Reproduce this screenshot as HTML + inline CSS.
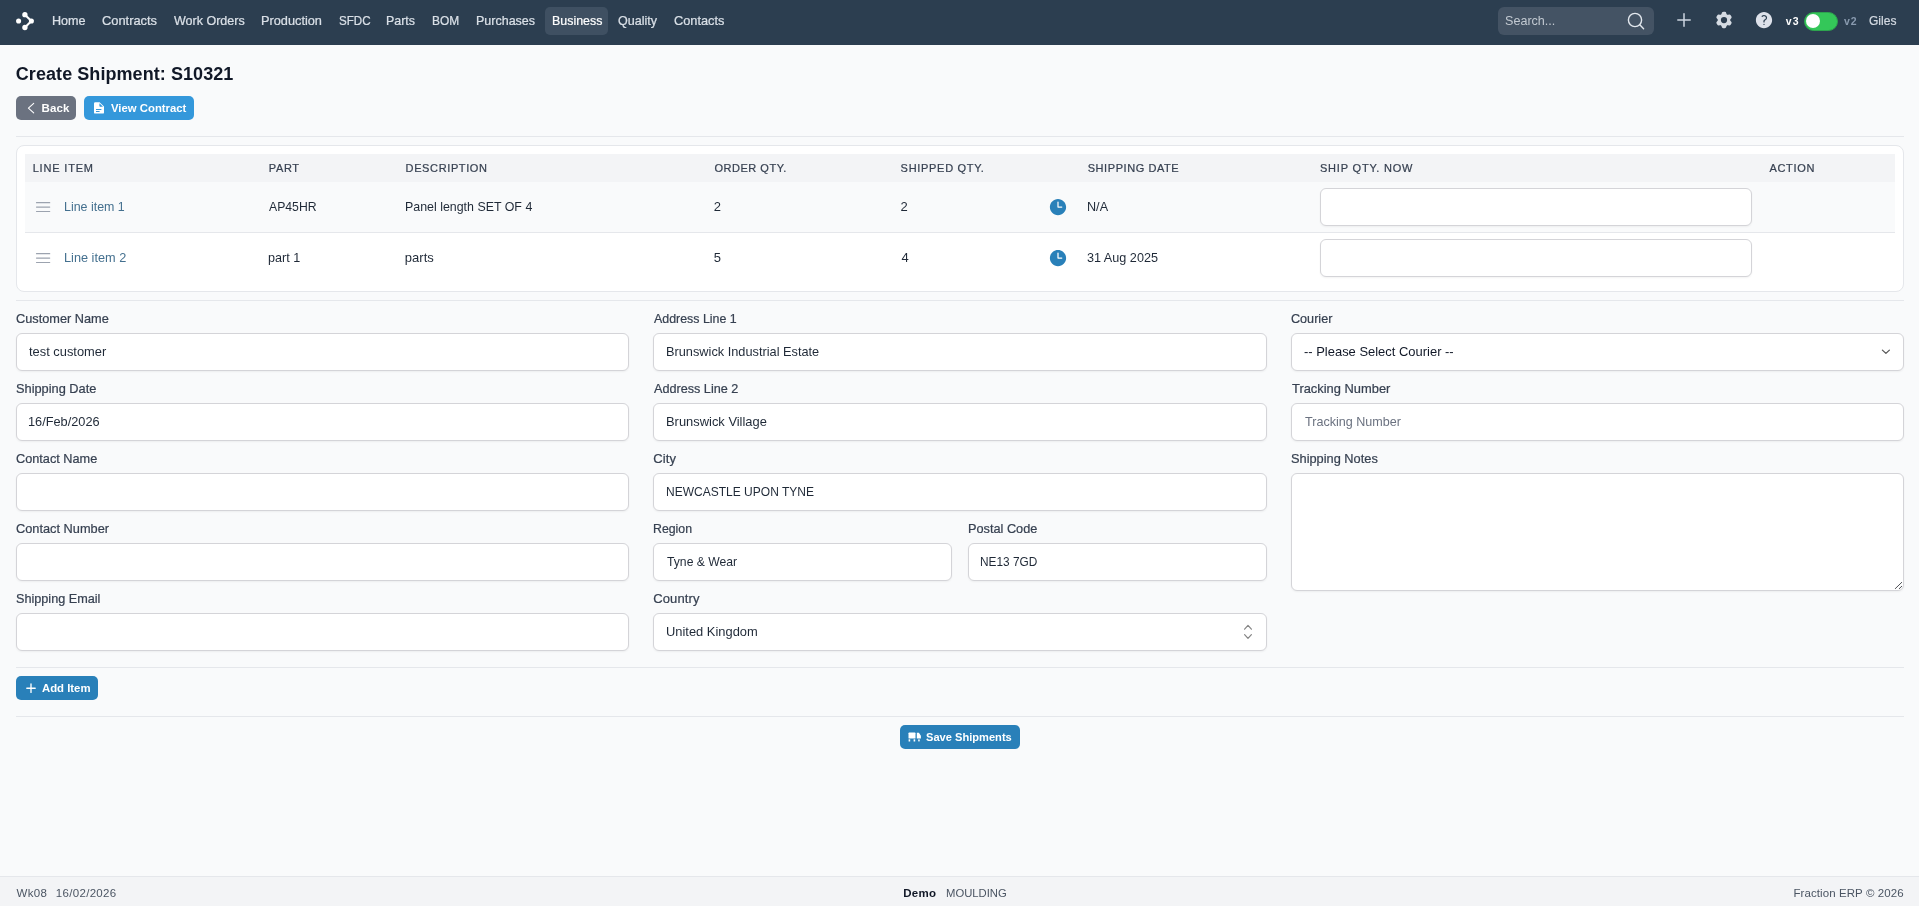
<!DOCTYPE html>
<html lang="en">
<head>
<meta charset="utf-8">
<title>Create Shipment: S10321</title>
<style>
*{box-sizing:border-box;margin:0;padding:0}
html,body{width:1919px;height:906px;overflow:hidden}
body{font-family:"Liberation Sans",sans-serif;background:#f9fafb;color:#1f2937;position:relative;font-size:13px}
.abs{position:absolute}
#tx{position:absolute;left:0;top:0;width:1919px;height:906px;will-change:transform;opacity:.999}
.t{position:absolute;white-space:nowrap;line-height:20px;transform-origin:0 50%}
#nav{position:absolute;left:0;top:0;width:1919px;height:45px;background:#2c3e50}
#act{position:absolute;left:545px;top:7px;width:63px;height:28px;border-radius:5px;background:#3f5062}
#search{position:absolute;left:1498px;top:7px;width:156px;height:28px;border-radius:6px;background:#445364}
.btn{position:absolute;height:24px;border-radius:5px}
.hr{position:absolute;left:16px;width:1888px;height:1px;background:#e5e7eb}
#card{position:absolute;left:16px;top:145px;width:1888px;height:147px;background:#fff;border:1px solid #e5e7eb;border-radius:8px}
#thead{position:absolute;left:25px;top:154px;width:1870px;height:28px;background:#f3f4f6}
#row1{position:absolute;left:25px;top:182px;width:1870px;height:51px;background:#f9fafb;border-bottom:1px solid #e5e7eb}
.inp{position:absolute;height:38px;background:#fff;border:1px solid #d4d4d8;border-radius:6px;box-shadow:0 1px 2px rgba(0,0,0,.05)}
#foot{position:absolute;left:0;top:876px;width:1919px;height:30px;background:#f3f4f6;border-top:1px solid #e5e7eb}
</style>
</head>
<body>

<!-- NAV -->
<div id="nav"></div>
<svg class="abs" style="left:14px;top:10px" width="22" height="22" viewBox="0 0 22 22">
  <g fill="#fff" stroke="none">
    <circle cx="4.6" cy="11" r="2.55"/>
    <circle cx="10.9" cy="4.7" r="2.65"/>
    <circle cx="17.4" cy="11" r="2.55"/>
    <circle cx="10.9" cy="17.5" r="2.65"/>
  </g>
  <path d="M10.9 4.7 L17.4 11 L10.9 17.5" fill="none" stroke="#fff" stroke-width="2.1" stroke-linecap="round" stroke-linejoin="round"/>
</svg>
<div id="act"></div>
<div id="search"></div>
<svg class="abs" style="left:1625px;top:10px" width="22" height="22" viewBox="0 0 22 22">
  <circle cx="10" cy="10" r="6.6" fill="none" stroke="#e3e8ee" stroke-width="1.4"/>
  <path d="M14.8 14.8 L18.6 18.7" stroke="#e3e8ee" stroke-width="1.4" stroke-linecap="round"/>
</svg>
<svg class="abs" style="left:1676px;top:12px" width="16" height="16" viewBox="0 0 16 16">
  <path d="M8 1.8 V14.2 M1.8 8 H14.2" stroke="#ccd5df" stroke-width="1.5" stroke-linecap="round"/>
</svg>
<svg class="abs" style="left:1714px;top:10px" width="20" height="20" viewBox="0 0 24 24"><path fill="#d5dbe3" fill-rule="evenodd" clip-rule="evenodd" d="M11.078 2.25c-.917 0-1.699.663-1.85 1.567L9.05 4.889c-.02.12-.115.26-.297.348a7.493 7.493 0 0 0-.986.57c-.166.115-.334.126-.45.083L6.3 5.508a1.875 1.875 0 0 0-2.282.819l-.922 1.597a1.875 1.875 0 0 0 .432 2.385l.84.692c.095.078.17.229.154.43a7.598 7.598 0 0 0 0 1.139c.015.2-.059.352-.153.43l-.841.692a1.875 1.875 0 0 0-.432 2.385l.922 1.597a1.875 1.875 0 0 0 2.282.818l1.019-.382c.115-.043.283-.031.45.082.312.214.641.405.985.57.182.088.277.228.297.35l.178 1.071c.151.904.933 1.567 1.85 1.567h1.844c.916 0 1.699-.663 1.85-1.567l.178-1.072c.02-.12.114-.26.297-.349.344-.165.673-.356.985-.57.167-.114.335-.125.45-.082l1.02.382a1.875 1.875 0 0 0 2.28-.819l.923-1.597a1.875 1.875 0 0 0-.432-2.385l-.84-.692c-.095-.078-.17-.229-.154-.43a7.614 7.614 0 0 0 0-1.139c-.016-.2.059-.352.153-.43l.84-.692c.708-.582.891-1.59.433-2.385l-.922-1.597a1.875 1.875 0 0 0-2.282-.818l-1.02.382c-.114.043-.282.031-.449-.083a7.49 7.49 0 0 0-.985-.57c-.183-.087-.277-.227-.297-.348l-.179-1.072a1.875 1.875 0 0 0-1.85-1.567h-1.843ZM12 15.75a3.75 3.75 0 1 0 0-7.5 3.75 3.75 0 0 0 0 7.5Z"/></svg>
<svg class="abs" style="left:1754px;top:10px" width="20" height="20" viewBox="0 0 24 24"><path fill="#dde1ea" fill-rule="evenodd" clip-rule="evenodd" d="M2.25 12c0-5.385 4.365-9.75 9.75-9.75s9.750 4.365 9.750 9.750-4.365 9.750-9.750 9.750S2.25 17.385 2.25 12Zm11.378-3.917c-.89-.777-2.366-.777-3.255 0a.75.75 0 0 1-.988-1.129c1.454-1.272 3.776-1.272 5.23 0 1.513 1.324 1.513 3.518 0 4.842a3.75 3.75 0 0 1-.837.552c-.676.328-1.028.774-1.028 1.152v.75a.75.75 0 0 1-1.5 0v-.75c0-1.279 1.060-2.107 1.875-2.502.182-.088.351-.199.503-.331.83-.727.83-1.857 0-2.584ZM12 18a.75.75 0 1 0 0-1.500.75.75 0 0 0 0 1.500Z"/></svg>
<div class="abs" style="left:1804px;top:11.5px;width:34px;height:19px;border-radius:10px;background:#34c759;border:1px solid #2da44e"></div>
<div class="abs" style="left:1806px;top:14px;width:14px;height:14px;border-radius:7px;background:#fff"></div>

<!-- BUTTONS -->
<div class="btn" style="left:16px;top:96px;width:60px;background:#6b7280"></div>
<svg class="abs" style="left:25px;top:102px" width="12" height="12" viewBox="0 0 12 12"><path d="M8.7 1.4 L3.4 6.1 L8.7 10.8" fill="none" stroke="#fff" stroke-width="1.1" stroke-linecap="round" stroke-linejoin="round"/></svg>
<div class="btn" style="left:84px;top:96px;width:110px;background:#3498db"></div>
<svg class="abs" style="left:93px;top:102px" width="12" height="12" viewBox="0 0 12 12"><path fill="#fff" fill-rule="evenodd" d="M2.2 0.2 H6.6 L11 4.6 V10.4 A1.2 1.2 0 0 1 9.8 11.6 H2.2 A1.2 1.2 0 0 1 1 10.4 V1.4 A1.2 1.2 0 0 1 2.2 0.2 Z M6.4 1.2 V4 A0.8 0.8 0 0 0 7.2 4.8 H10 Z M3 7 H8.4 V7.9 H3 Z M3 9 H6.6 V9.9 H3 Z"/></svg>

<div class="hr" style="top:136px"></div>

<!-- TABLE CARD -->
<div id="card"></div>
<div id="thead"></div>
<div id="row1"></div>
<svg class="abs" style="left:35px;top:201px" width="16" height="12" viewBox="0 0 16 12"><path d="M1.5 1.7 H14.7 M1.5 6.1 H14.7 M1.5 10.5 H14.7" stroke="#9ca3af" stroke-width="1.2" stroke-linecap="round"/></svg>
<svg class="abs" style="left:1047.9px;top:197px" width="20" height="20" viewBox="0 0 24 24"><path fill="#2980b9" fill-rule="evenodd" clip-rule="evenodd" d="M12 2.25c-5.385 0-9.75 4.365-9.750 9.750s4.365 9.750 9.750 9.750 9.750-4.365 9.750-9.750S17.385 2.25 12 2.25ZM12.75 6a.75.75 0 0 0-1.500 0v6c0 .414.336.75.75.75h4.500a.75.75 0 0 0 0-1.500h-3.750V6Z"/></svg>
<div class="inp" style="left:1320px;top:188px;width:432px"></div>
<svg class="abs" style="left:35px;top:252px" width="16" height="12" viewBox="0 0 16 12"><path d="M1.5 1.7 H14.7 M1.5 6.1 H14.7 M1.5 10.5 H14.7" stroke="#9ca3af" stroke-width="1.2" stroke-linecap="round"/></svg>
<svg class="abs" style="left:1047.9px;top:248px" width="20" height="20" viewBox="0 0 24 24"><path fill="#2980b9" fill-rule="evenodd" clip-rule="evenodd" d="M12 2.25c-5.385 0-9.75 4.365-9.750 9.750s4.365 9.750 9.750 9.750 9.750-4.365 9.750-9.750S17.385 2.25 12 2.25ZM12.75 6a.75.75 0 0 0-1.500 0v6c0 .414.336.75.75.75h4.500a.75.75 0 0 0 0-1.500h-3.750V6Z"/></svg>
<div class="inp" style="left:1320px;top:239px;width:432px"></div>

<div class="hr" style="top:300px"></div>

<!-- FORM -->
<div class="inp" style="left:16px;top:333px;width:613px"></div>
<div class="inp" style="left:16px;top:403px;width:613px"></div>
<div class="inp" style="left:16px;top:473px;width:613px"></div>
<div class="inp" style="left:16px;top:543px;width:613px"></div>
<div class="inp" style="left:16px;top:613px;width:613px"></div>

<div class="inp" style="left:653px;top:333px;width:614px"></div>
<div class="inp" style="left:653px;top:403px;width:614px"></div>
<div class="inp" style="left:653px;top:473px;width:614px"></div>
<div class="inp" style="left:653px;top:543px;width:299px"></div>
<div class="inp" style="left:968px;top:543px;width:299px"></div>
<div class="inp" style="left:653px;top:613px;width:614px"></div>
<svg class="abs" style="left:1242px;top:624px" width="12" height="16" viewBox="0 0 12 16"><path d="M2.6 5.2 L6 1.4 L9.4 5.2 M2.6 10.6 L6 14.4 L9.4 10.6" fill="none" stroke="#858585" stroke-width="1.2" stroke-linecap="round" stroke-linejoin="round"/></svg>

<div class="inp" style="left:1291px;top:333px;width:613px"></div>
<svg class="abs" style="left:1880px;top:347px" width="12" height="10" viewBox="0 0 12 10"><path d="M2.4 3.1 L5.9 6.4 L9.4 3.1" fill="none" stroke="#555" stroke-width="1.25" stroke-linecap="round" stroke-linejoin="round"/></svg>
<div class="inp" style="left:1291px;top:403px;width:613px"></div>
<div class="inp" style="left:1291px;top:473px;width:613px;height:118px"></div>
<svg class="abs" style="left:1892px;top:579px" width="10" height="10" viewBox="0 0 10 10"><path d="M9.9 3.2 L3.1 9.8 M9.8 7.2 L7.2 9.7" stroke="#505358" stroke-width="1" stroke-linecap="round"/></svg>

<div class="hr" style="top:667px"></div>
<div class="btn" style="left:16px;top:676px;width:82px;background:#2980b9"></div>
<svg class="abs" style="left:25px;top:682px" width="12" height="12" viewBox="0 0 12 12"><path d="M6 2 V10.4 M1.8 6.2 H10.2" stroke="#fff" stroke-width="1.35" stroke-linecap="round"/></svg>
<div class="hr" style="top:716px"></div>
<div class="btn" style="left:900px;top:725px;width:120px;background:#2980b9"></div>
<svg class="abs" style="left:908px;top:732px" width="14" height="10" viewBox="0 0 14 10">
  <g fill="#fff"><rect x="0.5" y="0.6" width="7" height="6" rx="0.7"/><path d="M8.8 0.8 h2.1 l2 3 v2.8 h-4.1z"/><rect x="0.6" y="7.3" width="1.6" height="2.2"/><rect x="5.6" y="7.3" width="1.6" height="2.2"/><rect x="10.2" y="7.4" width="1.5" height="2"/></g>
</svg>

<div id="foot"></div>

<div id="tx">
<span class="t" style="left:52.03px;top:11px;font-size:13px;font-weight:normal;color:#dbe1e8;transform:scaleX(0.9697);-webkit-text-stroke:0.22px #dbe1e8">Home</span>
<span class="t" style="left:101.91px;top:11px;font-size:13px;font-weight:normal;color:#dbe1e8;transform:scaleX(0.9889);-webkit-text-stroke:0.22px #dbe1e8">Contracts</span>
<span class="t" style="left:173.8px;top:11px;font-size:13px;font-weight:normal;color:#dbe1e8;transform:scaleX(0.963);-webkit-text-stroke:0.22px #dbe1e8">Work Orders</span>
<span class="t" style="left:260.92px;top:11px;font-size:13px;font-weight:normal;color:#dbe1e8;transform:scaleX(0.9803);-webkit-text-stroke:0.22px #dbe1e8">Production</span>
<span class="t" style="left:338.61px;top:11px;font-size:13px;font-weight:normal;color:#dbe1e8;transform:scaleX(0.8912);-webkit-text-stroke:0.22px #dbe1e8">SFDC</span>
<span class="t" style="left:386.34px;top:11px;font-size:13px;font-weight:normal;color:#dbe1e8;transform:scaleX(0.9552);-webkit-text-stroke:0.22px #dbe1e8">Parts</span>
<span class="t" style="left:432.38px;top:11px;font-size:13px;font-weight:normal;color:#dbe1e8;transform:scaleX(0.9179);-webkit-text-stroke:0.22px #dbe1e8">BOM</span>
<span class="t" style="left:475.84px;top:11px;font-size:13px;font-weight:normal;color:#dbe1e8;transform:scaleX(0.9617);-webkit-text-stroke:0.22px #dbe1e8">Purchases</span>
<span class="t" style="left:551.55px;top:11px;font-size:13px;font-weight:normal;color:#ffffff;transform:scaleX(0.9549);-webkit-text-stroke:0.22px #ffffff">Business</span>
<span class="t" style="left:618.44px;top:11px;font-size:13px;font-weight:normal;color:#dbe1e8;transform:scaleX(0.9641);-webkit-text-stroke:0.22px #dbe1e8">Quality</span>
<span class="t" style="left:673.92px;top:11px;font-size:13px;font-weight:normal;color:#dbe1e8;transform:scaleX(0.982);-webkit-text-stroke:0.22px #dbe1e8">Contacts</span>
<span class="t" style="left:1505.43px;top:11px;font-size:13px;font-weight:normal;color:#c3cad2;transform:scaleX(0.968)">Search...</span>
<span class="t" style="left:1785.8px;top:11px;font-size:10.5px;font-weight:bold;color:#ffffff;letter-spacing:1.1px">v3</span>
<span class="t" style="left:1844px;top:11px;font-size:10.5px;font-weight:bold;color:#8a9bb0;letter-spacing:0.8px">v2</span>
<span class="t" style="left:1868.68px;top:11px;font-size:13px;font-weight:normal;color:#d5dbe3;transform:scaleX(0.925);-webkit-text-stroke:0.22px #d5dbe3">Giles</span>
<span class="t" style="left:15.8px;top:64px;font-size:18px;font-weight:bold;color:#111827;letter-spacing:0.064px">Create Shipment: S10321</span>
<span class="t" style="left:41.6px;top:98px;font-size:11.5px;font-weight:bold;color:#ffffff;letter-spacing:0.067px">Back</span>
<span class="t" style="left:110.8px;top:98px;font-size:11.5px;font-weight:bold;color:#ffffff;transform:scaleX(0.9857)">View Contract</span>
<span class="t" style="left:32.7px;top:158px;font-size:11px;font-weight:normal;color:#374151;letter-spacing:0.813px;-webkit-text-stroke:0.22px #374151">LINE ITEM</span>
<span class="t" style="left:268.8px;top:158px;font-size:11px;font-weight:normal;color:#374151;letter-spacing:0.633px;-webkit-text-stroke:0.22px #374151">PART</span>
<span class="t" style="left:405.6px;top:158px;font-size:11px;font-weight:normal;color:#374151;letter-spacing:0.62px;-webkit-text-stroke:0.22px #374151">DESCRIPTION</span>
<span class="t" style="left:714.4px;top:158px;font-size:11px;font-weight:normal;color:#374151;letter-spacing:0.533px;-webkit-text-stroke:0.22px #374151">ORDER QTY.</span>
<span class="t" style="left:900.6px;top:158px;font-size:11px;font-weight:normal;color:#374151;letter-spacing:0.7px;-webkit-text-stroke:0.22px #374151">SHIPPED QTY.</span>
<span class="t" style="left:1087.7px;top:158px;font-size:11px;font-weight:normal;color:#374151;letter-spacing:0.567px;-webkit-text-stroke:0.22px #374151">SHIPPING DATE</span>
<span class="t" style="left:1319.9px;top:158px;font-size:11px;font-weight:normal;color:#374151;letter-spacing:0.817px;-webkit-text-stroke:0.22px #374151">SHIP QTY. NOW</span>
<span class="t" style="left:1769.4px;top:158px;font-size:11px;font-weight:normal;color:#374151;letter-spacing:0.72px;-webkit-text-stroke:0.22px #374151">ACTION</span>
<span class="t" style="left:64.29px;top:197px;font-size:13px;font-weight:normal;color:#44708f;transform:scaleX(0.9556)">Line item 1</span>
<span class="t" style="left:269.0px;top:197px;font-size:13px;font-weight:normal;color:#1f2937;transform:scaleX(0.94)">AP45HR</span>
<span class="t" style="left:404.85px;top:197px;font-size:13px;font-weight:normal;color:#1f2937;transform:scaleX(0.9538)">Panel length SET OF 4</span>
<span class="t" style="left:713.7px;top:197px;font-size:13px;font-weight:normal;color:#1f2937">2</span>
<span class="t" style="left:900.5px;top:197px;font-size:13px;font-weight:normal;color:#1f2937">2</span>
<span class="t" style="left:1086.93px;top:197px;font-size:13px;font-weight:normal;color:#1f2937;transform:scaleX(0.9714)">N/A</span>
<span class="t" style="left:64.27px;top:248px;font-size:13px;font-weight:normal;color:#44708f;transform:scaleX(0.9782)">Line item 2</span>
<span class="t" style="left:268.03px;top:248px;font-size:13px;font-weight:normal;color:#1f2937;transform:scaleX(0.9688)">part 1</span>
<span class="t" style="left:404.8px;top:248px;font-size:13px;font-weight:normal;color:#1f2937;letter-spacing:0.025px">parts</span>
<span class="t" style="left:713.7px;top:248px;font-size:13px;font-weight:normal;color:#1f2937">5</span>
<span class="t" style="left:901.5px;top:248px;font-size:13px;font-weight:normal;color:#1f2937">4</span>
<span class="t" style="left:1086.93px;top:248px;font-size:13px;font-weight:normal;color:#1f2937;transform:scaleX(0.9722)">31 Aug 2025</span>
<span class="t" style="left:16.37px;top:309px;font-size:13px;font-weight:normal;color:#374151;transform:scaleX(0.9801);-webkit-text-stroke:0.22px #374151">Customer Name</span>
<span class="t" style="left:16.37px;top:379px;font-size:13px;font-weight:normal;color:#374151;transform:scaleX(0.9844);-webkit-text-stroke:0.22px #374151">Shipping Date</span>
<span class="t" style="left:16.37px;top:449px;font-size:13px;font-weight:normal;color:#374151;transform:scaleX(0.9774);-webkit-text-stroke:0.22px #374151">Contact Name</span>
<span class="t" style="left:16.37px;top:519px;font-size:13px;font-weight:normal;color:#374151;transform:scaleX(0.9824);-webkit-text-stroke:0.22px #374151">Contact Number</span>
<span class="t" style="left:16.38px;top:589px;font-size:13px;font-weight:normal;color:#374151;transform:scaleX(0.9735);-webkit-text-stroke:0.22px #374151">Shipping Email</span>
<span class="t" style="left:654.2px;top:309px;font-size:13px;font-weight:normal;color:#374151;transform:scaleX(0.9535);-webkit-text-stroke:0.22px #374151">Address Line 1</span>
<span class="t" style="left:654.2px;top:379px;font-size:13px;font-weight:normal;color:#374151;transform:scaleX(0.9721);-webkit-text-stroke:0.22px #374151">Address Line 2</span>
<span class="t" style="left:653.2px;top:449px;font-size:13px;font-weight:normal;color:#374151;letter-spacing:0.167px;-webkit-text-stroke:0.22px #374151">City</span>
<span class="t" style="left:653.35px;top:519px;font-size:13px;font-weight:normal;color:#374151;transform:scaleX(0.9475);-webkit-text-stroke:0.22px #374151">Region</span>
<span class="t" style="left:967.92px;top:519px;font-size:13px;font-weight:normal;color:#374151;transform:scaleX(0.9783);-webkit-text-stroke:0.22px #374151">Postal Code</span>
<span class="t" style="left:653.3px;top:589px;font-size:13px;font-weight:normal;color:#374151;letter-spacing:0.1px;-webkit-text-stroke:0.22px #374151">Country</span>
<span class="t" style="left:1291.28px;top:309px;font-size:13px;font-weight:normal;color:#374151;transform:scaleX(0.9702);-webkit-text-stroke:0.22px #374151">Courier</span>
<span class="t" style="left:1291.55px;top:379px;font-size:13px;font-weight:normal;color:#374151;transform:scaleX(0.9914);-webkit-text-stroke:0.22px #374151">Tracking Number</span>
<span class="t" style="left:1291.27px;top:449px;font-size:13px;font-weight:normal;color:#374151;transform:scaleX(0.9845);-webkit-text-stroke:0.22px #374151">Shipping Notes</span>
<span class="t" style="left:29.15px;top:342px;font-size:13px;font-weight:normal;color:#1f2937;transform:scaleX(0.9904)">test customer</span>
<span class="t" style="left:28.17px;top:412px;font-size:13px;font-weight:normal;color:#1f2937;transform:scaleX(0.9812)">16/Feb/2026</span>
<span class="t" style="left:665.77px;top:342px;font-size:13px;font-weight:normal;color:#1f2937;transform:scaleX(0.9816)">Brunswick Industrial Estate</span>
<span class="t" style="left:665.76px;top:412px;font-size:13px;font-weight:normal;color:#1f2937;transform:scaleX(0.9925)">Brunswick Village</span>
<span class="t" style="left:665.73px;top:482px;font-size:13px;font-weight:normal;color:#1f2937;transform:scaleX(0.9242)">NEWCASTLE UPON TYNE</span>
<span class="t" style="left:667.35px;top:552px;font-size:13px;font-weight:normal;color:#1f2937;transform:scaleX(0.9367)">Tyne &amp; Wear</span>
<span class="t" style="left:980.24px;top:552px;font-size:13px;font-weight:normal;color:#1f2937;transform:scaleX(0.9123)">NE13 7GD</span>
<span class="t" style="left:665.66px;top:622px;font-size:13px;font-weight:normal;color:#1f2937;transform:scaleX(0.9918)">United Kingdom</span>
<span class="t" style="left:1304.3px;top:342px;font-size:13px;font-weight:normal;color:#111827;transform:scaleX(0.996)">-- Please Select Courier --</span>
<span class="t" style="left:1305.3px;top:412px;font-size:13px;font-weight:normal;color:#6b7280;transform:scaleX(0.9677)">Tracking Number</span>
<span class="t" style="left:42.0px;top:678px;font-size:11.5px;font-weight:bold;color:#ffffff;transform:scaleX(0.9857)">Add Item</span>
<span class="t" style="left:926.3px;top:727px;font-size:11.5px;font-weight:bold;color:#ffffff;transform:scaleX(0.9652)">Save Shipments</span>
<span class="t" style="left:16.6px;top:883px;font-size:11.5px;font-weight:normal;color:#4b5563;letter-spacing:0.333px">Wk08</span>
<span class="t" style="left:55.8px;top:883px;font-size:11.5px;font-weight:normal;color:#4b5563;letter-spacing:0.311px">16/02/2026</span>
<span class="t" style="left:903.2px;top:883px;font-size:11.5px;font-weight:bold;color:#111827;letter-spacing:0.3px">Demo</span>
<span class="t" style="left:945.62px;top:883px;font-size:11.5px;font-weight:normal;color:#4b5563;transform:scaleX(0.98)">MOULDING</span>
<span class="t" style="left:1793.4px;top:883px;font-size:11.5px;font-weight:normal;color:#4b5563;letter-spacing:0.089px">Fraction ERP © 2026</span>
</div>

</body>
</html>
